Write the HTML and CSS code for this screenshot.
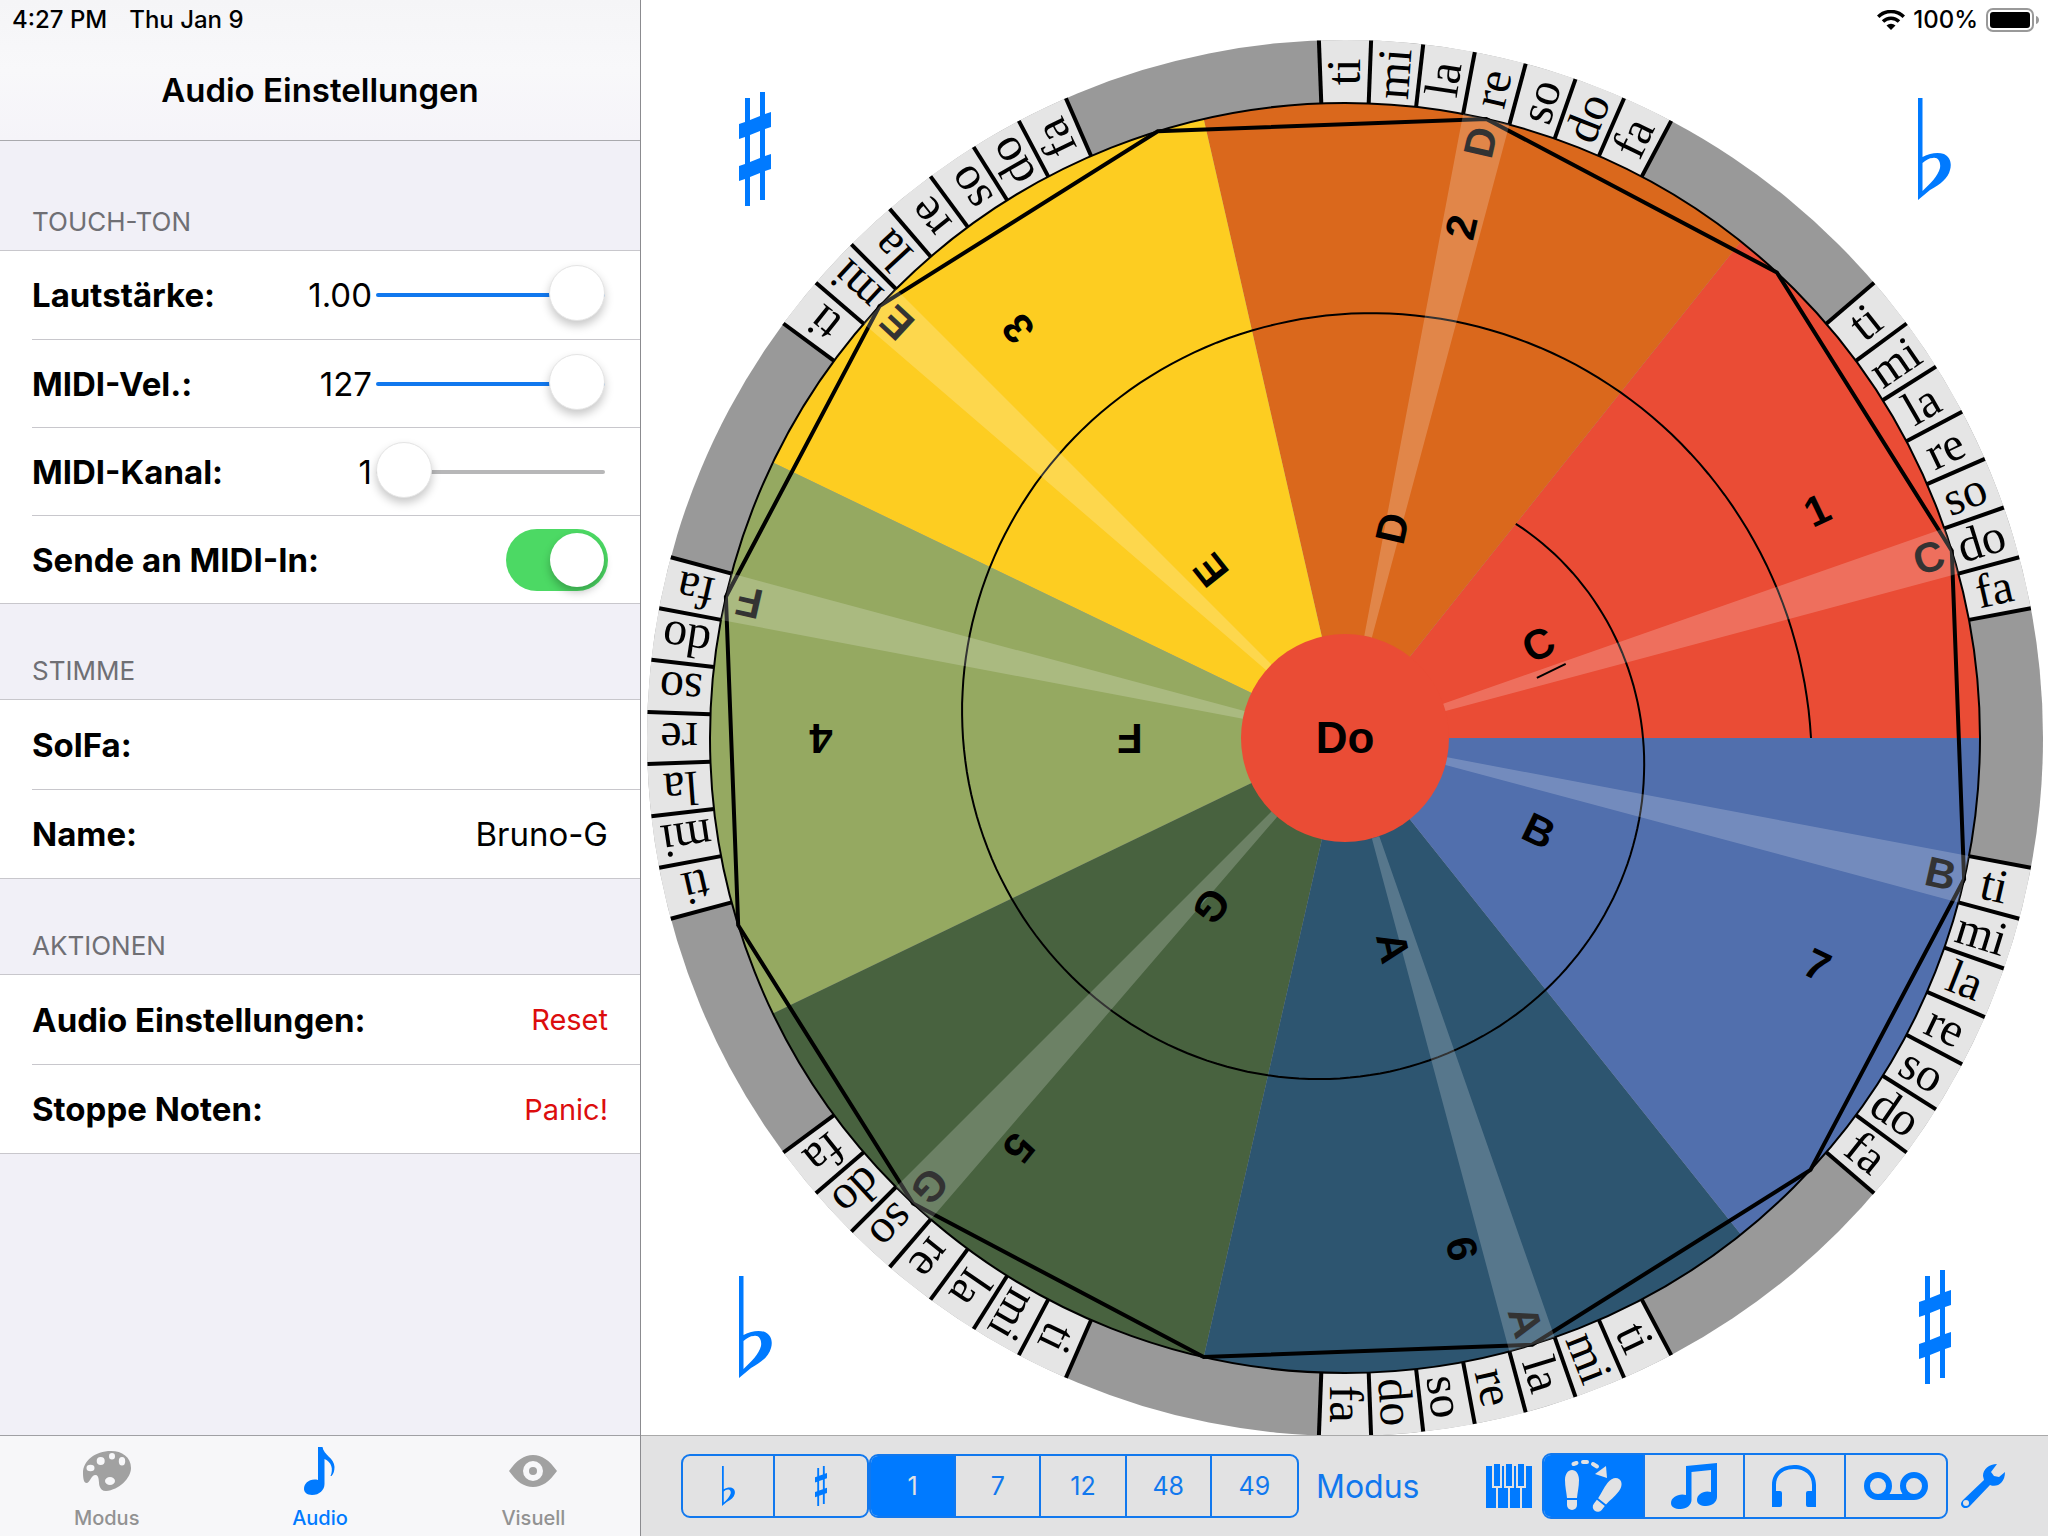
FILE: index.html
```html
<!DOCTYPE html>
<html lang="de">
<head>
<meta charset="utf-8">
<meta name="viewport" content="width=device-width, initial-scale=1">
<title>Audio Einstellungen</title>
<link rel="stylesheet" href="styles.css">
</head>
<body>
<svg class="symbols" aria-hidden="true">
  <symbol id="sharp" viewBox="0 0 32 114" preserveAspectRatio="none">
    <path d="M6 6h5v22l10-4V0h5v22l6-2v15l-6 2v27l6-2v15l-6 2v29h-5V81l-10 4v29H6V87l-6 2V74l6-2V45l-6 2V32l6-2zM11 43v27l10-4V39z"/>
  </symbol>
  <symbol id="flat" viewBox="0 0 33 102" preserveAspectRatio="none">
    <path fill-rule="evenodd" d="M0 0h4.500v59C12 55 20 54 26 56c6 3 8 9 6 16C30 80 23 86 12 92L0 102zM4.500 65v28C12 86 20 78 22 70c1-6-2-11-7-10-4 0-7 2-10.500 5z"/>
  </symbol>
</svg>

<div class="app">
  <aside class="sidebar">
    <header class="nav-bar">
      <div class="status"><span>4:27 PM</span><span>Thu Jan 9</span></div>
      <h1 class="nav-title">Audio Einstellungen</h1>
    </header>

    <form class="settings">
      <section>
        <h2 class="group-title first">TOUCH-TON</h2>
        <div class="group">
          <div class="row">
            <label class="name" for="volume">Lautstärke:</label>
            <output class="value" for="volume">1.00</output>
            <input class="slider full" id="volume" type="range" min="0" max="1" step="0.01" value="1">
          </div>
          <div class="row">
            <label class="name" for="velocity">MIDI-Vel.:</label>
            <output class="value" for="velocity">127</output>
            <input class="slider full" id="velocity" type="range" min="0" max="127" value="127">
          </div>
          <div class="row">
            <label class="name" for="channel">MIDI-Kanal:</label>
            <output class="value" for="channel">1</output>
            <input class="slider" id="channel" type="range" min="1" max="16" value="1">
          </div>
          <div class="row">
            <label class="name" for="midi-in">Sende an MIDI-In:</label>
            <input class="switch" id="midi-in" type="checkbox" checked>
          </div>
        </div>
      </section>
      <section>
        <h2 class="group-title">STIMME</h2>
        <div class="group roomy">
          <div class="row">
            <label class="name" for="solfa">SolFa:</label>
            <input class="field" id="solfa" type="text" value="">
          </div>
          <div class="row">
            <label class="name" for="voice">Name:</label>
            <input class="field" id="voice" type="text" value="Bruno-G">
          </div>
        </div>
      </section>
      <section>
        <h2 class="group-title">AKTIONEN</h2>
        <div class="group roomy">
          <div class="row">
            <span class="name">Audio Einstellungen:</span>
            <button class="action" type="button">Reset</button>
          </div>
          <div class="row">
            <span class="name">Stoppe Noten:</span>
            <button class="action" type="button">Panic!</button>
          </div>
        </div>
      </section>
    </form>

    <nav class="tabs">
      <button class="tab" type="button">
        <svg class="tab-icon" width="48" height="40" viewBox="0 0 48 40" aria-hidden="true">
          <path fill-rule="evenodd" d="M28 0C12 0 0 10 0 22c0 6 1 10 3.500 10C7 32 8 24 12.500 24c4 0 3 7 4 11 1 3 3 5 6.500 5C36 39 48 27 48 17 48 6 39 0 28 0zM7.500 13.800a4 3.200 0 1 1 0 6.400 4 3.200 0 0 1 0-6.400zM17.700 6a4 4 0 1 1 0 8 4 4 0 0 1 0-8zM29 2a3 3.200 0 1 1 0 6.400A3 3.200 0 0 1 29 2zM39 6a3.200 4.200 0 1 1 0 8.400A3.200 4.200 0 0 1 39 6zM27 26a5 4 0 1 1 0 8 5 4 0 0 1 0-8z"/>
        </svg>
        <span>Modus</span>
      </button>
      <button class="tab current" type="button" aria-current="page">
        <svg class="tab-icon" width="31" height="48" viewBox="0 0 31 48" aria-hidden="true">
          <path d="M14 0h4.500c1 8 12 11 12 20 0 4-1 7-3 9h-1c3-7 1-14-6-17v25c0 6-5 11-12.500 11C3 48 0 45 0 42c0-6 6-11 14-9z"/>
        </svg>
        <span>Audio</span>
      </button>
      <button class="tab" type="button">
        <svg class="tab-icon" width="48" height="32" viewBox="0 0 48 32" aria-hidden="true">
          <path fill-rule="evenodd" d="M0 16C8 5 15 0 24 0s16 5 24 16C40 27 33 32 24 32S8 27 0 16zM24 6a10 10 0 1 0 0 20 10 10 0 0 0 0-20z"/>
          <circle cx="24" cy="16" r="4"/>
        </svg>
        <span>Visuell</span>
      </button>
    </nav>
  </aside>

  <main class="stage">
    <div class="canvas">
      <svg class="wheel" id="wheel" viewBox="0 0 1407 1435" role="img" aria-label="Do"></svg>
      <div class="device-status">
        <svg width="28" height="20" viewBox="0 0 28 20" aria-hidden="true">
          <g fill="none" stroke="#000" stroke-width="3.400"><path d="M1.200 6.800a18 18 0 0 1 25.600 0"/><path d="M6 11.500a11.300 11.300 0 0 1 16 0"/></g>
          <path d="M14 20l-4.500-4.500a6.500 6.500 0 0 1 9 0z"/>
        </svg>
        <span>100%</span>
        <svg width="53" height="24" viewBox="0 0 53 24" aria-hidden="true">
          <rect x="1" y="1" width="46" height="22" rx="6" fill="none" stroke="#999" stroke-width="2"/>
          <rect x="4" y="4" width="40" height="16" rx="3"/>
          <path fill="#999" d="M50 8c4 1 4 7 0 8z"/>
        </svg>
      </div>
      <button class="corner top left" type="button" aria-label="Kreuz"><svg width="32" height="114"><use href="#sharp"/></svg></button>
      <button class="corner top right" type="button" aria-label="Be"><svg width="33" height="102"><use href="#flat"/></svg></button>
      <button class="corner bottom left" type="button" aria-label="Be"><svg width="33" height="102"><use href="#flat"/></svg></button>
      <button class="corner bottom right" type="button" aria-label="Kreuz"><svg width="32" height="114"><use href="#sharp"/></svg></button>
    </div>

    <div class="toolbar">
      <div class="segments accidentals">
        <button class="segment" type="button" aria-label="Be"><svg width="13" height="40"><use href="#flat"/></svg></button>
        <button class="segment" type="button" aria-label="Kreuz"><svg width="12" height="40"><use href="#sharp"/></svg></button>
      </div>
      <div class="segments counts">
        <button class="segment on" type="button" aria-pressed="true">1</button>
        <button class="segment" type="button">7</button>
        <button class="segment" type="button">12</button>
        <button class="segment" type="button">48</button>
        <button class="segment" type="button">49</button>
      </div>
      <button class="plain mode" type="button">Modus</button>
      <button class="plain keys" type="button" aria-label="Klavier">
        <svg width="46" height="44" viewBox="0 0 46 44" aria-hidden="true">
          <path d="M0 2h10v42H0zM12 2h10v42H12zM24 2h10v42H24zM36 2h10v42H36z"/>
          <g stroke="#e2e2e3" stroke-width="2"><path d="M7 -1h8v24H7zM19 -1h8v24h-8zM31 -1h8v24h-8z"/></g>
        </svg>
      </button>
      <div class="segments views">
        <button class="segment on" type="button" aria-pressed="true" aria-label="Schritte">
          <svg width="60" height="56" viewBox="0 0 60 56" aria-hidden="true">
            <g id="shoe"><path d="M9 12c4 0 7 4 7 10 0 7-1.500 12-2 18H4C3.500 34 2 29 2 22c0-6 3-10 7-10z"/><path d="M4 42h10v5a5 5 0 0 1-10 0z"/></g>
            <use href="#shoe" transform="translate(44 37) rotate(38) translate(-9 -32)"/>
            <path d="M10.500 6l3-1M20 4h4M30 6l4 2.500" fill="none" stroke="#e2e2e3" stroke-width="4" stroke-linecap="round"/>
            <path d="M32 16L43 8l1 12z"/>
          </svg>
        </button>
        <button class="segment" type="button" aria-label="Noten">
          <svg width="46" height="46" viewBox="0 0 46 46" aria-hidden="true">
            <path d="M15 3L46 0v34c0 5-5 9-11 9-5 0-9-2-9-6 0-6 7-10 14-8V7L20.500 9v28c0 5-5 9-11 9C4 46 0 44 0 40c0-6 8-10 15-8z"/>
          </svg>
        </button>
        <button class="segment" type="button" aria-label="Kopfhörer">
          <svg width="44" height="42" viewBox="0 0 44 42" aria-hidden="true">
            <path d="M0 42V20C0 8 9 0 22 0s22 8 22 20v22H36q-2 0-2-2V28q0-2 2-2h4v-6C40 10 33 4 22 4S4 10 4 20v6h4q2 0 2 2v12q0 2-2 2z"/>
          </svg>
        </button>
        <button class="segment" type="button" aria-label="Aufnahme">
          <svg width="64" height="28" viewBox="0 0 64 28" aria-hidden="true">
            <g fill="none" stroke="#007aff" stroke-width="6"><circle cx="14" cy="14" r="11"/><circle cx="50" cy="14" r="11"/><path d="M14 25h36"/></g>
          </svg>
        </button>
      </div>
      <button class="plain" type="button" aria-label="Einstellungen">
        <svg width="44" height="44" viewBox="0 0 44 44" aria-hidden="true">
          <path fill-rule="evenodd" d="M36 0C28 0 22 5 22 12l1 4L2 36c-2 2-3 5-.5 7s5 1 7-.5L29 21c7 3 15-2 15-13l-6 5-5-1-3-4zM5 36a3 3 0 1 1 0 6 3 3 0 0 1 0-6z"/>
        </svg>
      </button>
    </div>
  </main>
</div>
<script src="wheel.js"></script>
</body>
</html>
```
FILE: styles.css
```css
* {
  box-sizing: border-box;
}

html,
body {
  height: 100%;
}

body {
  margin: 0;
  font-family: Inter, "Liberation Sans", sans-serif;
  color: #000;
  background: #fff;
}

button,
input {
  font: inherit;
  color: inherit;
  border: 0;
  padding: 0;
  margin: 0;
  background: none;
}

svg {
  display: block;
}

.symbols {
  position: absolute;
  width: 0;
  height: 0;
}

.app {
  display: grid;
  grid-template-columns: 641px minmax(0, 1fr);
  min-height: 100vh;
}

/* Sidebar */

.sidebar {
  display: flex;
  flex-direction: column;
  border-right: 1px solid #8b8b8f;
  background: #f1f0f7;
}

.nav-bar {
  height: 141px;
  border-bottom: 1px solid #a9a9ad;
  background: linear-gradient(#f5f5f7, #f8f8fa 50%, #f5f4f9);
}

.status {
  display: flex;
  gap: 22px;
  padding: 5px 12px;
  font-size: 24px;
  line-height: 30px;
  font-weight: 500;
}

.nav-title {
  margin: 28px 0 0;
  font-size: 33px;
  line-height: 44px;
  font-weight: 600;
  text-align: center;
}

.settings {
  flex: 1;
}

.group-title {
  margin: 0;
  padding: 51px 32px 13px;
  font-size: 26px;
  line-height: 32px;
  font-weight: 400;
  color: #6f6f74;
}

.group-title.first {
  padding-top: 65px;
}

.group {
  border-bottom: 1px solid #c8c7cc;
  background: #fff;
  box-shadow: 0 -1px 0 #c8c7cc;
}

.row {
  display: flex;
  align-items: center;
  height: 88px;
  margin-left: 32px;
  padding-right: 32px;
  font-size: 33px;
}

.row + .row {
  border-top: 1px solid #c8c7cc;
}

.roomy .row {
  height: 89px;
}

.name {
  flex: 1;
  font-weight: 700;
}

.value {
  margin-right: 4px;
}

.slider {
  appearance: none;
  width: 229px;
  height: 56px;
  margin-right: 3px;
}

.slider::-webkit-slider-runnable-track {
  height: 4px;
  border-radius: 2px;
  background: #b7b7b8;
}

.slider.full::-webkit-slider-runnable-track {
  background: #1178ee;
}

.slider::-webkit-slider-thumb {
  appearance: none;
  width: 56px;
  height: 56px;
  margin-top: -28px;
  border: 1px solid #e4e4e4;
  border-radius: 50%;
  background: #fff;
  box-shadow: 0 5px 10px rgba(0, 0, 0, 0.22);
}

.switch {
  appearance: none;
  display: flex;
  justify-content: flex-end;
  width: 102px;
  height: 62px;
  padding: 4px;
  border-radius: 31px;
  background: #4cd964;
}

.switch::before {
  content: "";
  width: 54px;
  height: 54px;
  border-radius: 50%;
  background: #fff;
  box-shadow: 0 5px 8px rgba(0, 0, 0, 0.25);
}

.field {
  width: 280px;
  text-align: right;
}

.action {
  font-size: 29px;
  color: #dc0d0d;
}

.tabs {
  display: grid;
  grid-template-columns: repeat(3, 1fr);
  height: 101px;
  border-top: 1px solid #a0a0a4;
  background: #f7f7f9;
}

.tab {
  display: grid;
  grid-template-rows: 70px 24px;
  place-items: center;
  font-size: 20px;
  line-height: 24px;
  font-weight: 500;
  color: #929292;
  align-content: start;
}

.tab.current {
  color: #007aff;
}

.tab-icon {
  fill: #a1a1a1;
}

.current .tab-icon {
  fill: #007aff;
}

/* Stage */

.stage {
  display: flex;
  flex-direction: column;
  min-width: 0;
}

.canvas {
  position: relative;
  flex: 1;
  min-height: 0;
}

.wheel {
  width: 100%;
  height: 100%;
}

.wheel .solfa {
  font: 48px "Liberation Serif", serif;
  text-anchor: middle;
}

.wheel .mark {
  font: bold 42px "Liberation Sans", sans-serif;
  text-anchor: middle;
}

.wheel .hub {
  font-size: 44px;
}

.device-status {
  position: absolute;
  top: 5px;
  right: 9px;
  display: flex;
  align-items: center;
  gap: 8px;
  font-size: 24px;
  line-height: 30px;
  font-weight: 500;
}

.corner {
  position: absolute;
  display: grid;
  place-items: center;
  height: 114px;
  fill: #007aff;
}

.corner.top {
  top: 92px;
}

.corner.bottom {
  bottom: 51px;
}

.corner.left {
  left: 98px;
}

.corner.right {
  right: 97px;
}

/* Toolbar */

.toolbar {
  display: flex;
  align-items: center;
  height: 101px;
  padding: 0 43px 0 40px;
  border-top: 1px solid #a9a9a9;
  background: #e2e2e3;
  color: #1178ee;
}

.segments {
  display: grid;
  grid-auto-flow: column;
  grid-auto-columns: 1fr;
  height: 64px;
  border: 2px solid #1178ee;
  border-radius: 9px;
  overflow: hidden;
}

.segment {
  display: grid;
  place-items: center;
  border-right: 2px solid #1178ee;
  font-size: 25px;
  fill: #007aff;
}

.segment:last-child {
  border-right: 0;
}

.segment.on {
  background: #007aff;
  color: #e2e2e3;
  fill: #e2e2e3;
}

.accidentals {
  width: 188px;
}

.counts {
  width: 430px;
}

.views {
  width: 406px;
  height: 66px;
  margin: 0 13px 0 10px;
}

.plain {
  fill: #007aff;
}

.mode {
  margin-left: 17px;
  font-size: 32px;
}

.keys {
  margin-left: auto;
}
```
FILE: wheel.js
```js
const CX = 704;
const CY = 738;
const RIM = 698;
const DISC = 635;
const HUB = 104;
const SECTOR = 360 / 7;
const SLOT = 360 / 84;

const solfa = ["fa", "do", "so", "re", "la", "mi", "ti"];
const sectors = [
  { note: "C", color: "#ea4c35", tone: 15 },
  { note: "D", color: "#da681c", tone: 75 },
  { note: "E", color: "#fdcd21", tone: 135 },
  { note: "F", color: "#95a961", tone: 165 },
  { note: "G", color: "#48623f", tone: 225 },
  { note: "A", color: "#2d5570", tone: 285 },
  { note: "B", color: "#516fad", tone: 345 }
];

const wheel = document.getElementById("wheel");

function add(name, attrs, text) {
  const el = document.createElementNS("http://www.w3.org/2000/svg", name);
  for (const key in attrs) el.setAttribute(key, attrs[key]);
  if (text) el.textContent = text;
  wheel.appendChild(el);
}

function point(radius, degrees) {
  const a = degrees * Math.PI / 180;
  return (CX + radius * Math.cos(a)).toFixed(1) + " " + (CY - radius * Math.sin(a)).toFixed(1);
}

// Ring segment between two radii, angles counted anticlockwise from the right.
function band(inner, outer, from, to, fill, opacity) {
  add("path", {
    d: `M${point(inner, from)}L${point(outer, from)}A${outer} ${outer} 0 0 0 ${point(outer, to)}` +
       `L${point(inner, to)}A${inner} ${inner} 0 0 1 ${point(inner, from)}Z`,
    fill: fill,
    "fill-opacity": opacity || 1
  });
}

function label(cls, text, radius, degrees, drop) {
  add("text", {
    class: cls,
    transform: `translate(${CX} ${CY}) rotate(${-degrees})`,
    x: radius,
    y: drop
  }, text);
}

add("circle", { cx: CX, cy: CY, r: RIM, fill: "#999" });

sectors.forEach((s, i) => band(HUB - 2, DISC, i * SECTOR, (i + 1) * SECTOR, s.color));
add("circle", { cx: CX, cy: CY, r: HUB, fill: "#ea4c35" });

sectors.forEach((s, i) => {
  const start = i * SECTOR + SLOT * 2.5;
  band(DISC, RIM, start, start + SLOT * 7, "#e5e5e5");
  for (let k = 0; k <= 7; k++) {
    const a = start + k * SLOT;
    add("path", { d: `M${point(DISC, a)}L${point(RIM, a)}`, stroke: "#000", "stroke-width": 4 });
  }
  solfa.forEach((name, k) => label("solfa", name, 666, start + (k + 0.5) * SLOT, 15));
});

add("circle", { cx: CX, cy: CY, r: DISC, fill: "none", stroke: "#000", "stroke-width": 2 });

const corners = [];
for (let k = 0; k < 12; k++) corners.push(point(DISC, SLOT * 4 + k * 30));
add("path", { d: "M" + corners.join("L") + "Z", fill: "none", stroke: "#000", "stroke-width": 4 });

const spiral = [];
const turn = 360 + SECTOR;
for (let a = 0; a <= 240; a++) {
  spiral.push(point(466 - 192 * a / 240, turn * a / 240));
}
add("path", { d: "M" + spiral.join("L"), fill: "none", stroke: "#000", "stroke-width": 2 });

sectors.forEach((s, i) => {
  const middle = (i + 0.5) * SECTOR;
  label("mark", s.note, 611, s.tone + SLOT / 2, 14);
  band(HUB, DISC, s.tone, s.tone + SLOT, "#fff", 0.2);
  label("mark", s.note, 215, middle, 14);
  label("mark", String(i + 1), 524, middle, 14);
});

add("path", {
  d: "M199 29H231",
  stroke: "#000",
  "stroke-width": 2,
  transform: `translate(${CX} ${CY}) rotate(${-SECTOR / 2})`
});
label("mark hub", "Do", 0, 0, 15);
```
